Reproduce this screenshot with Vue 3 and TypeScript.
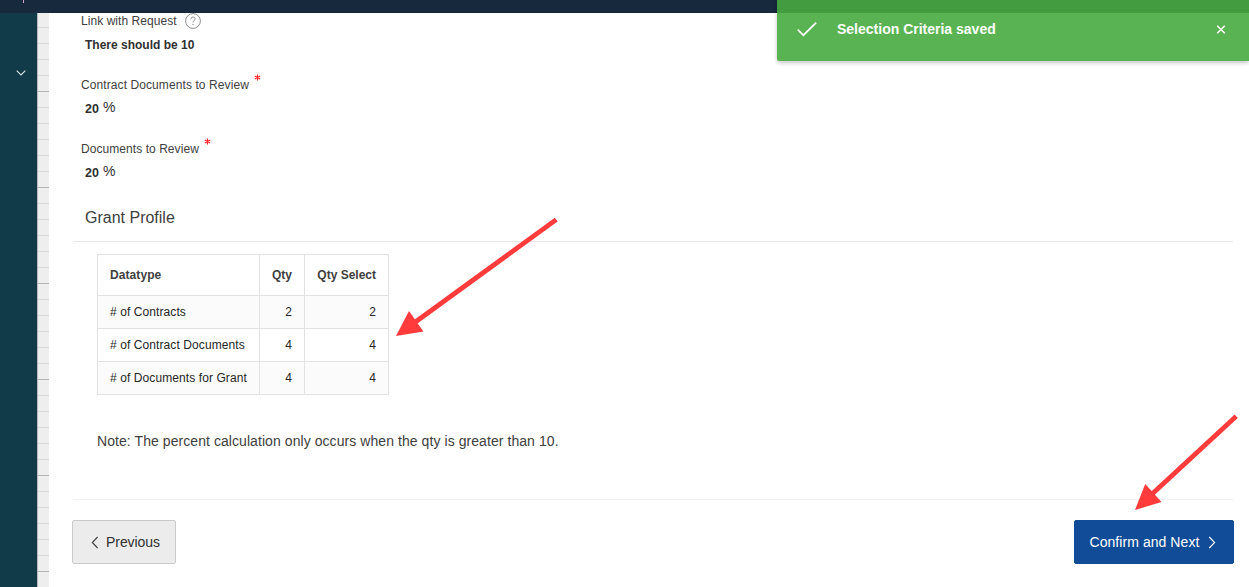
<script setup lang="ts">
import { ref } from 'vue'

interface ProfileRow {
  datatype: string
  qty: number
  qtySelect: number
}

interface PercentField {
  label: string
  value: number
  cls: string
}

const showNotice = ref(true)

const percentFields: PercentField[] = [
  { label: 'Contract Documents to Review', value: 20, cls: 'label-contract' },
  { label: 'Documents to Review', value: 20, cls: 'label-documents' },
]

const rows: ProfileRow[] = [
  { datatype: '# of Contracts', qty: 2, qtySelect: 2 },
  { datatype: '# of Contract Documents', qty: 4, qtySelect: 4 },
  { datatype: '# of Documents for Grant', qty: 4, qtySelect: 4 },
]
</script>

<template>
  <div class="page">
    <header class="topbar"><span class="topbar-mark"></span></header>

    <div class="body">
      <nav class="sidebar">
        <svg class="sidebar-toggle" width="12" height="8" viewBox="0 0 12 8">
          <path d="M1.7 1.7 6 5.9 10.3 1.7" fill="none" stroke="#dce4e8" stroke-width="1.1" />
        </svg>
      </nav>
      <div class="ruler"></div>

      <main class="content">
        <section class="field">
          <div class="label">
            <span class="label-link">Link with Request</span>
            <svg class="help" width="16" height="16" viewBox="0 0 16 16">
              <circle cx="8" cy="8" r="7.4" fill="none" stroke="#8f8f8f" stroke-width="1" />
              <path d="M5.9 6.2C5.9 3.3 10.1 3.3 10.1 5.9 10.1 7.5 8 7.6 8 9.5" fill="none" stroke="#8f8f8f" stroke-width="1" />
              <circle cx="8" cy="11.5" r="0.7" fill="#8f8f8f" />
            </svg>
          </div>
          <div class="value value-link">There should be 10</div>
        </section>

        <section v-for="f in percentFields" :key="f.label" class="field">
          <div class="label">
            <span :class="f.cls">{{ f.label }}</span>
            <svg class="required" width="7" height="7" viewBox="0 0 7 7">
              <path d="M3.5.5V6.5M.8 2 6.2 5M6.2 2 .8 5" fill="none" stroke="#ff2222" stroke-width="1.1" />
            </svg>
          </div>
          <div class="value percent"><b>{{ f.value }}</b><span>%</span></div>
        </section>

        <section class="profile">
          <h2>Grant Profile</h2>
          <table>
            <thead>
              <tr>
                <th class="c-type">Datatype</th>
                <th class="c-qty">Qty</th>
                <th class="c-select">Qty Select</th>
              </tr>
            </thead>
            <tbody>
              <tr v-for="r in rows" :key="r.datatype">
                <td>{{ r.datatype }}</td>
                <td class="num">{{ r.qty }}</td>
                <td class="num">{{ r.qtySelect }}</td>
              </tr>
            </tbody>
          </table>
          <p class="note">Note: The percent calculation only occurs when the qty is greater than 10.</p>
        </section>

        <footer class="actions">
          <button type="button" class="btn btn-prev">
            <svg width="8" height="13" viewBox="0 0 8 13">
              <path d="M6.6 1 1.3 6.5 6.6 12" fill="none" stroke="#404040" stroke-width="1.1" />
            </svg>
            <span>Previous</span>
          </button>
          <button type="button" class="btn btn-next">
            <span>Confirm and Next</span>
            <svg width="8" height="13" viewBox="0 0 8 13">
              <path d="M1.3 1 6.6 6.5 1.3 12" fill="none" stroke="#fff" stroke-width="1.1" />
            </svg>
          </button>
        </footer>
      </main>
    </div>

    <!-- Success notification -->
    <div v-if="showNotice" class="notice" role="alert">
      <svg class="notice-check" width="20" height="15" viewBox="0 0 20 15">
        <path d="M.8 7.6 6.4 13.2 19.2.7" fill="none" stroke="#fff" stroke-width="1.7" />
      </svg>
      <span class="notice-text">Selection Criteria saved</span>
      <button type="button" class="notice-close" aria-label="Close" @click="showNotice = false">
        <svg width="10" height="9" viewBox="0 0 10 9">
          <path d="M1.2.7 8.8 8.3M8.8.7 1.2 8.3" stroke="#fff" stroke-width="1.5" />
        </svg>
      </button>
    </div>

    <!-- Callout arrows -->
    <svg class="arrows" width="1249" height="587" viewBox="0 0 1249 587">
      <g stroke="#ff3b3b" stroke-width="4.8">
        <path d="M556.2 219.6 414 323" />
        <path d="M1236.2 416.2 1151 495" />
      </g>
      <g fill="#ff3b3b">
        <path d="M396 336 409 311 423.4 331.4Z" />
        <path d="M1135 510 1145.2 484 1161.5 502Z" />
      </g>
    </svg>
  </div>
</template>

<style>
body {
  margin: 0;
  background: #fff;
}
</style>

<style scoped>
.page {
  position: relative;
  display: flex;
  flex-direction: column;
  width: 1249px;
  height: 587px;
  overflow: hidden;
  background: #fff;
  color: #404040;
  font-family: "Liberation Sans", Arial, sans-serif;
  font-size: 12px;
}

.topbar {
  flex: none;
  height: 13px;
  padding-left: 23px;
  background: #16293d;
}

.topbar-mark {
  display: block;
  width: 1px;
  height: 3px;
  background: #c9a6cf;
}

.body {
  display: flex;
  flex: 1;
  min-height: 0;
}

.sidebar {
  flex: none;
  box-sizing: border-box;
  width: 37px;
  padding: 56px 0 0 15px;
  background: #123b49;
}

.sidebar-toggle {
  display: block;
}

.ruler {
  flex: none;
  box-sizing: border-box;
  width: 12px;
  border-left: 1px solid #b5b9bb;
  background-color: #eee;
  background-image:
    linear-gradient(#b4b4b4 1px, transparent 1px),
    linear-gradient(#dadada 1px, transparent 1px);
  background-size: 100% 96px, 100% 16px;
  background-position: 0 78px, 0 14px;
}

.content {
  display: flex;
  flex: 1;
  flex-direction: column;
  padding: 0 15px 0 23px;
}

/* Fields */
.field {
  flex: none;
  height: 64px;
  padding-left: 9px;
}

.label {
  display: flex;
  align-items: center;
  height: 16px;
  line-height: 16px;
  white-space: nowrap;
}

.label-link,
.label-documents {
  letter-spacing: 0.06px;
}

.label-contract {
  letter-spacing: 0.09px;
}

.help {
  margin-left: 8px;
}

.required {
  align-self: flex-start;
  margin: -3px 0 0 5px;
  overflow: visible;
}

.value {
  height: 20px;
  margin-top: 6px;
  padding-left: 4px;
  line-height: 20px;
  color: #303030;
  font-weight: bold;
}

.percent {
  display: flex;
  align-items: baseline;
  gap: 4px;
  margin-top: 5px;
  font-size: 12.5px;
}

.percent span {
  position: relative;
  top: -1px;
  font-size: 14px;
  font-weight: normal;
}

/* Grant profile */
.profile {
  display: flex;
  flex: none;
  flex-direction: column;
  align-items: flex-start;
  height: 294px;
}

h2 {
  align-self: stretch;
  box-sizing: border-box;
  height: 37px;
  margin: 0 1px;
  padding-left: 12px;
  border-bottom: 1px solid #e6e6e6;
  font-size: 16px;
  font-weight: normal;
  line-height: 25px;
}

table {
  width: 292px;
  margin: 12px 0 0 25px;
  border-collapse: separate;
  border-spacing: 0;
  border-top: 1px solid #e2e2e2;
  border-left: 1px solid #e2e2e2;
  table-layout: fixed;
}

th,
td {
  box-sizing: border-box;
  height: 33px;
  padding: 0 12px;
  border-right: 1px solid #e2e2e2;
  border-bottom: 1px solid #e2e2e2;
  line-height: 16px;
  text-align: left;
  white-space: nowrap;
}

th {
  height: 41px;
}

td {
  color: #262626;
  letter-spacing: 0.09px;
}

tbody tr:nth-child(odd) {
  background: #fbfbfb;
}

.c-type {
  width: 162px;
  letter-spacing: 0.08px;
}

.c-qty {
  width: 45px;
}

.c-qty,
.c-select,
.num {
  text-align: right;
}

.note {
  margin: 36px 0 0 25px;
  font-size: 14px;
  letter-spacing: 0.068px;
  line-height: 20px;
  white-space: nowrap;
}

/* Footer buttons */
.actions {
  display: flex;
  justify-content: space-between;
  padding-top: 21px;
  background: linear-gradient(#f0f0f0, #f0f0f0) 1px 0 / 1160px 1px no-repeat;
}

.btn {
  display: flex;
  align-items: center;
  box-sizing: border-box;
  height: 44px;
  padding: 0;
  border: 1px solid #cacaca;
  border-radius: 2px;
  font: 14px "Liberation Sans", Arial, sans-serif;
  white-space: nowrap;
}

.btn-prev {
  width: 104px;
  padding-left: 18px;
  gap: 7px;
  background: #ececec;
  color: #303030;
  letter-spacing: -0.06px;
}

.btn-next {
  width: 160px;
  padding-left: 14.5px;
  gap: 8.5px;
  border-color: #104c97;
  background: #104c97;
  color: #fff;
  letter-spacing: 0.06px;
}

/* Notification */
.notice {
  position: absolute;
  top: 0;
  right: 0;
  display: flex;
  align-items: center;
  box-sizing: border-box;
  width: 472px;
  height: 61px;
  padding: 0 23px 3px 20px;
  border-radius: 0 0 0 2px;
  background: linear-gradient(#439c40 13px, #5ab352 13px);
  box-shadow: 0 2px 4px rgba(0, 0, 0, 0.22);
  color: #fff;
}

.notice-text {
  margin-left: 20px;
  font-size: 14px;
  font-weight: bold;
  line-height: 20px;
}

.notice-close {
  display: flex;
  margin-left: auto;
  padding: 0;
  border: 0;
  background: none;
}

.arrows {
  position: absolute;
  top: 0;
  left: 0;
  pointer-events: none;
}
</style>
